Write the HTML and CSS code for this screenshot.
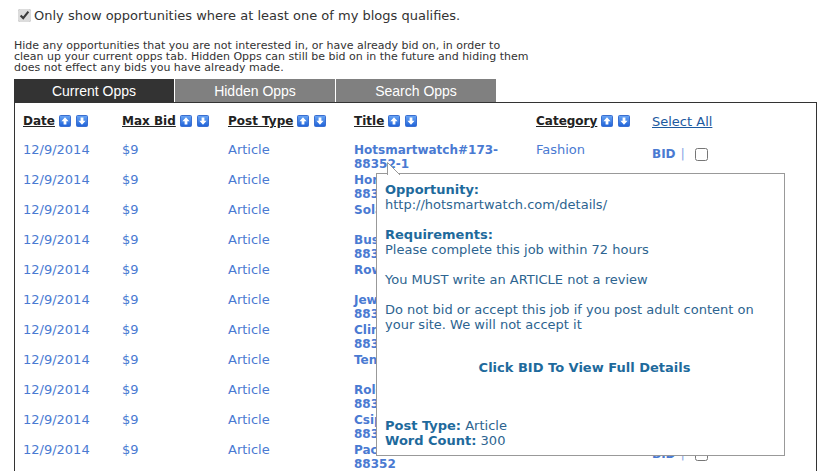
FILE: index.html
```html
<!DOCTYPE html>
<html lang="en">

<head>
    <meta charset="UTF-8">
    <title>Opportunities</title>
    <link rel="stylesheet" href="styles.css">
</head>

<body>

    <!-- Filter -->
    <label class="filter">
        <input type="checkbox" checked>
        <span>Only show opportunities where at least one of my blogs qualifies.</span>
    </label>

    <p class="hint">
        Hide any opportunities that you are not interested in, or have already bid on, in order to<br>
        clean up your current opps tab. Hidden Opps can still be bid on in the future and hiding them<br>
        does not effect any bids you have already made.
    </p>

    <!-- Tabs -->
    <div class="tabs">
        <div class="tab active">Current Opps</div>
        <div class="tab">Hidden Opps</div>
        <div class="tab">Search Opps</div>
    </div>

    <div class="panel">
        <div class="opps">
            <div class="head"><a>Date</a><svg class="sort"><use href="#up"/></svg><svg class="sort"><use href="#down"/></svg></div>
            <div class="head"><a>Max Bid</a><svg class="sort"><use href="#up"/></svg><svg class="sort"><use href="#down"/></svg></div>
            <div class="head"><a>Post Type</a><svg class="sort"><use href="#up"/></svg><svg class="sort"><use href="#down"/></svg></div>
            <div class="head"><a>Title</a><svg class="sort"><use href="#up"/></svg><svg class="sort"><use href="#down"/></svg></div>
            <div class="head"><a>Category</a><svg class="sort"><use href="#up"/></svg><svg class="sort"><use href="#down"/></svg></div>
            <div class="head"><a class="select-all">Select All</a></div>
        </div>

        <div class="opps rows" id="rows"></div>

        <!-- Tooltip for the first title -->
        <div class="tooltip">
            <svg class="tail" width="16" height="14"><path d="M1.5 14 V1.5 L14 14" fill="#fff" stroke="#999"/></svg>
            <p><b>Opportunity:</b><br>http://hotsmartwatch.com/details/</p>
            <p><b>Requirements:</b><br>Please complete this job within 72 hours</p>
            <p>You MUST write an ARTICLE not a review</p>
            <p>Do not bid or accept this job if you post adult content on your site. We will not accept it</p>
            <p class="cta"><b>Click BID To View Full Details</b></p>
            <p class="meta"><b>Post Type:</b> Article<br><b>Word Count:</b> 300</p>
        </div>
    </div>

    <!-- sort arrow icons -->
    <svg width="0" height="0" class="defs">
        <defs>
            <linearGradient id="blue" x1="0" y1="0" x2="0" y2="1">
                <stop offset="0" stop-color="#6aa6f5"/>
                <stop offset="1" stop-color="#1f62d8"/>
            </linearGradient>
            <symbol id="up" viewBox="0 0 12 12">
                <rect x="0.5" y="0.5" width="11" height="11" rx="1" fill="url(#blue)" stroke="#3b6fd0"/>
                <path d="M6 2.2 L9.6 6.2 H7.4 V9.6 H4.6 V6.2 H2.4 Z" fill="#fff"/>
            </symbol>
            <symbol id="down" viewBox="0 0 12 12">
                <rect x="0.5" y="0.5" width="11" height="11" rx="1" fill="url(#blue)" stroke="#3b6fd0"/>
                <path d="M6 9.8 L9.6 5.8 H7.4 V2.4 H4.6 V5.8 H2.4 Z" fill="#fff"/>
            </symbol>
        </defs>
    </svg>

    <script>
        const titles = [
            "Hotsmartwatch#173-88352-1",
            "Homegarden#174-88352-2",
            "Solartech#175",
            "Businessnews#176-88352",
            "Rowing#177",
            "Jewelrybox#178-88352",
            "Clinicalcare#179-88352",
            "Tennis#180",
            "Rolexwatch#181-88352",
            "Csiphonecase#182-88352",
            "Pacificblue#183-88352"
        ];

        const rows = document.getElementById('rows');
        titles.forEach(function (title) {
            rows.innerHTML +=
                '<div>12/9/2014</div>' +
                '<div>$9</div>' +
                '<div>Article</div>' +
                '<div class="title">' + title + '</div>' +
                '<div>Fashion</div>' +
                '<div class="bid"><b>BID</b><span class="sep">|</span><input type="checkbox"></div>';
        });
    </script>

</body>

</html>
```

FILE: styles.css
```css
body {
    margin: 6px 14px 0;
    font-family: "DejaVu Sans", Verdana, sans-serif;
    font-size: 13px;
    color: #333;
    background: #fff;
}

.filter {
    display: flex;
    align-items: center;
    height: 19px;
}

.filter input {
    margin: 0 3px 0 4px;
    width: 13px;
    height: 13px;
    accent-color: #dcdcdc;
}

.hint {
    margin: 15px 0 0;
    font-size: 11px;
    line-height: 11px;
    color: #333;
}

/* Tabs */
.tabs {
    display: flex;
    gap: 1px;
    margin-top: 6px;
}

.tab {
    width: 160px;
    height: 23px;
    line-height: 24px;
    text-align: center;
    font-family: "Liberation Sans", Arial, sans-serif;
    font-size: 14px;
    color: #fff;
    background-color: #808080;
}

.tab.active {
    background-color: #333;
}

.panel {
    position: relative;
    border: 1px solid #333;
    border-bottom: none;
    height: 357px;
    padding: 11px 0 0 8px;
}

/* Table */
.opps {
    display: grid;
    grid-template-columns: 99px 106px 126px 182px 116px auto;
    line-height: 15px;
}

.head {
    height: 29px;
    display: flex;
    align-items: flex-start;
}

.head a {
    font-size: 12px;
    font-weight: bold;
    color: #222;
    text-decoration: underline;
    margin-right: 4px;
}

.head a.select-all {
    font-size: 13px;
    font-weight: normal;
    color: #1d5aa0;
}

.sort {
    width: 12px;
    height: 12px;
    margin: 1px 5px 0 0;
}

.defs {
    position: absolute;
}

.rows {
    grid-auto-rows: 30px;
    line-height: 14px;
    color: #4a7ad2;
}

.rows .title {
    font-size: 12px;
    font-weight: bold;
    padding-right: 30px;
}

.rows .bid {
    display: flex;
    align-items: center;
    height: 14px;
    padding-top: 4px;
}

.bid b {
    font-size: 12px;
}

.bid .sep {
    color: #8aa6e6;
    margin-left: 5px;
}

.bid input {
    margin: 0 0 0 10px;
    width: 13px;
    height: 13px;
}

/* Tooltip */
.tooltip {
    position: absolute;
    left: 361px;
    top: 70px;
    width: 399px;
    height: 273px;
    padding: 8px 0 0 8px;
    background: #fff;
    border: 1px solid #999;
    color: #2d6490;
    line-height: 15px;
}

.tooltip b {
    color: #1e6a9c;
}

.tooltip p {
    margin: 0 0 15px;
}

.tooltip .cta {
    text-align: center;
    margin: 28px 0 0;
}

.tooltip .meta {
    margin: 43px 0 0;
}

.tail {
    position: absolute;
    left: 9px;
    top: -13px;
}
```
